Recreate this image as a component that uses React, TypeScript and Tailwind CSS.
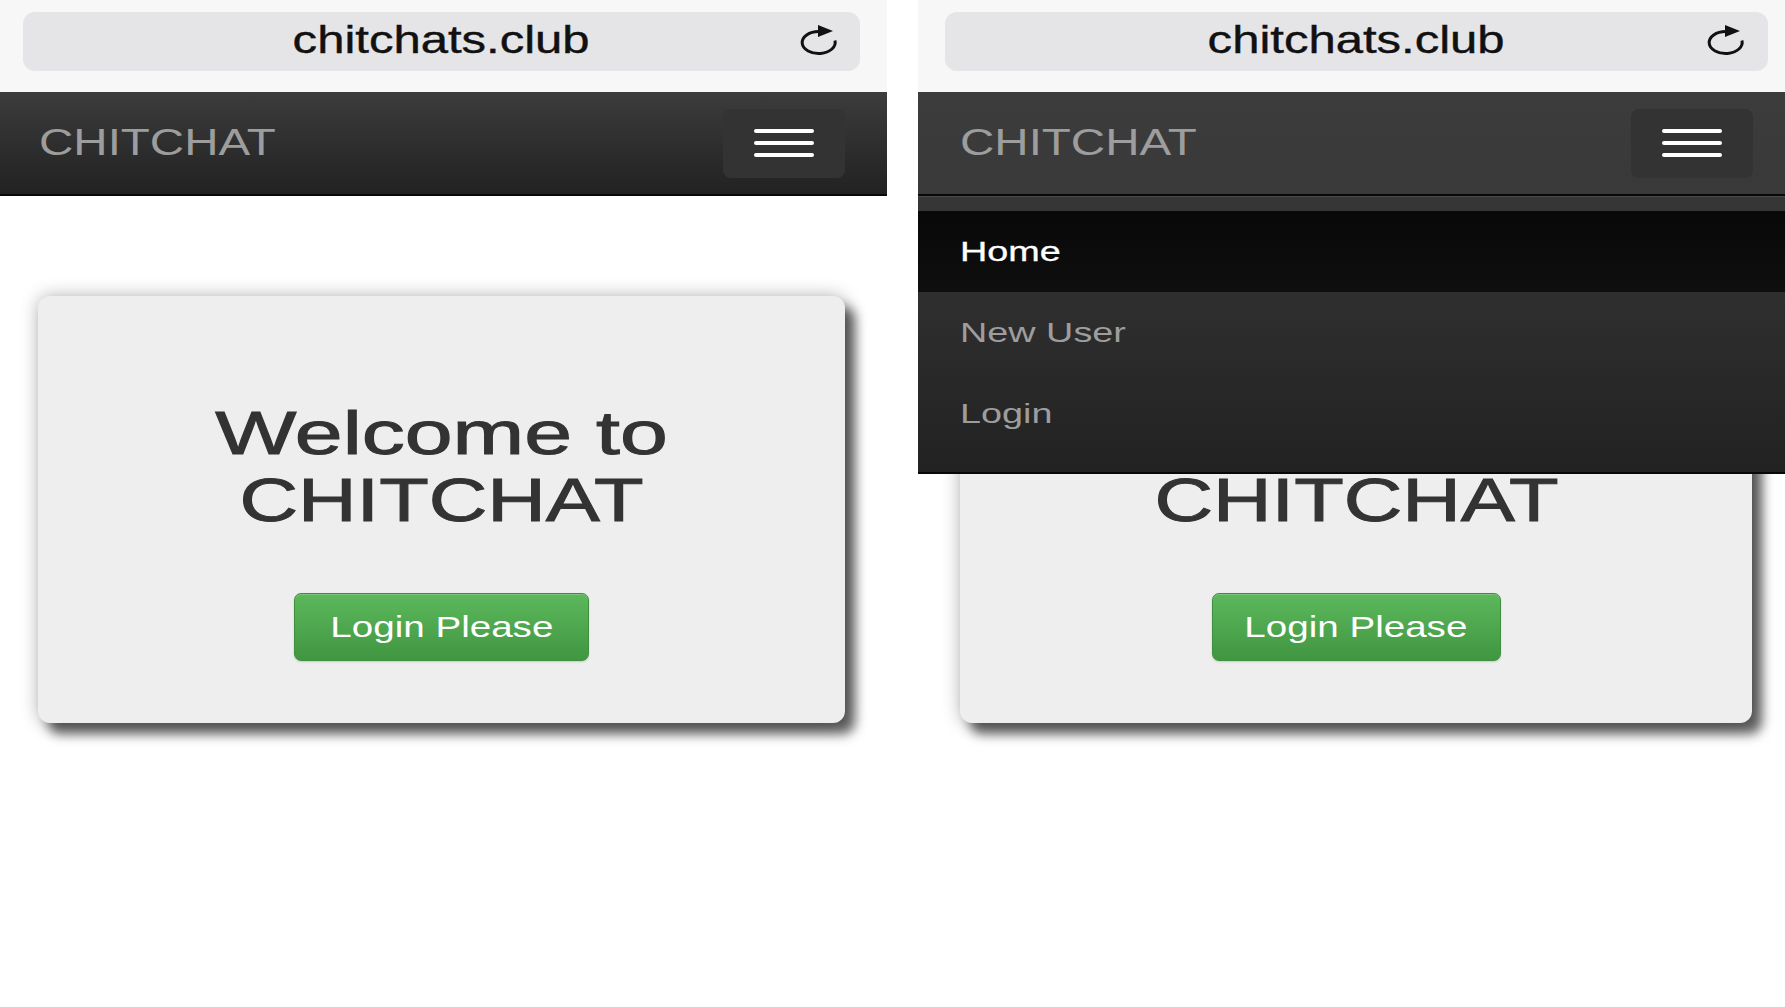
import React from 'react';

const font = "font-['Liberation_Sans',Arial,sans-serif]";

function RefreshIcon() {
  return (
    <svg width="40" height="32" viewBox="0 0 40 32" fill="none">
      <path d="M19.7 7.5 A16.5 11 0 1 0 35.9 16.5" stroke="#111" strokeWidth="3" />
      <path d="M19 1 L34 7 L19 13 Z" fill="#111" />
    </svg>
  );
}

function Burger() {
  return (
    <div className="flex h-[69px] w-[122px] flex-col items-center justify-center gap-[8px] rounded-[8px] bg-[#333]">
      <span className="h-[4px] w-[60px] rounded-full bg-white" />
      <span className="h-[4px] w-[60px] rounded-full bg-white" />
      <span className="h-[4px] w-[60px] rounded-full bg-white" />
    </div>
  );
}

function Phone({ side }: { side: 'left' | 'right' }) {
  const left = side === 'left';

  return (
    <div className={`relative h-full bg-white ${left ? 'w-[887px]' : 'w-[867px] overflow-hidden'}`}>
      {/* safari address bar */}
      <div className={`h-[92px] bg-[#f7f7f7] pt-[12px] ${left ? 'pl-[23px] pr-[27px]' : 'pl-[27px] pr-[17px]'}`}>
        <div className="relative flex h-[59px] items-center justify-center rounded-[12px] bg-[#e5e5e8] pb-[4px]">
          <span className="inline-block scale-x-[1.29] text-[38px] leading-none text-[#111] [-webkit-text-stroke:0.4px_#111]">
            chitchats.club
          </span>
          <div className={`absolute top-[12px] ${left ? 'right-[21px]' : 'right-[22px]'}`}>
            <RefreshIcon />
          </div>
        </div>
      </div>

      {/* navbar */}
      <div className="relative z-10">
        <div
          className={`flex h-[104px] items-center justify-between border-b-2 border-[#080808] bg-linear-to-b ${
            left ? 'from-[#3c3c3c] to-[#222] pl-[39px] pr-[42px]' : 'from-[#3c3c3c] to-[#393939] pl-[42px] pr-[32px]'
          }`}
        >
          <span className="inline-block origin-left scale-x-[1.32] text-[36px] leading-none text-[#9d9d9d]">CHITCHAT</span>
          <Burger />
        </div>

        {!left && (
          <div className="absolute left-0 right-0 top-full border-t border-[#4a4a4a] border-b-2 border-b-[#080808] bg-linear-to-b from-[#363636] to-[#222] pt-[14px] pb-[18px]">
            <div className="flex h-[81px] items-center bg-linear-to-b from-[#080808] to-[#0f0f0f] pl-[42px]">
              <span className="inline-block origin-left scale-x-[1.35] text-[28px] leading-none text-white [-webkit-text-stroke:0.3px_#fff]">Home</span>
            </div>
            <div className="flex h-[81px] items-center pl-[42px]">
              <span className="inline-block origin-left scale-x-[1.35] text-[28px] leading-none text-[#9d9d9d]">New User</span>
            </div>
            <div className="flex h-[81px] items-center pl-[42px]">
              <span className="inline-block origin-left scale-x-[1.35] text-[28px] leading-none text-[#9d9d9d]">Login</span>
            </div>
          </div>
        )}
      </div>

      {/* jumbotron */}
      <div className={`pt-[100px] ${left ? 'pl-[38px]' : 'pl-[42px]'}`}>
        <div
          className={`flex h-[427px] flex-col items-center rounded-[12px] bg-[#eeeeee] pt-[104px] shadow-[10px_11px_12px_rgba(0,0,0,0.62),0_0_18px_rgba(0,0,0,0.3)] ${
            left ? 'w-[807px]' : 'w-[792px]'
          }`}
        >
          <h1 className="text-center text-[61px] font-normal leading-[67px] text-[#333] [-webkit-text-stroke:1px_#333]">
            <span className="block scale-x-[1.41]">Welcome to</span>
            <span className="block scale-x-[1.33]">CHITCHAT</span>
          </h1>
          <button
            className={`mt-[59px] flex h-[68px] items-center justify-center rounded-[7px] border border-[#3e8f3e] bg-linear-to-b from-[#5cb85c] to-[#419641] shadow-[inset_0_1px_0_rgba(255,255,255,0.2),0_1px_2px_rgba(0,0,0,0.15)] ${
              left ? 'w-[295px]' : 'w-[289px]'
            }`}
          >
            <span className="inline-block scale-x-[1.33] text-[29px] leading-none text-white">Login Please</span>
          </button>
        </div>
      </div>
    </div>
  );
}

export default function App() {
  return (
    <div className={`flex h-[1007px] w-[1785px] overflow-hidden bg-white ${font}`}>
      <Phone side="left" />
      <div className="w-[31px] bg-white" />
      <Phone side="right" />
    </div>
  );
}
